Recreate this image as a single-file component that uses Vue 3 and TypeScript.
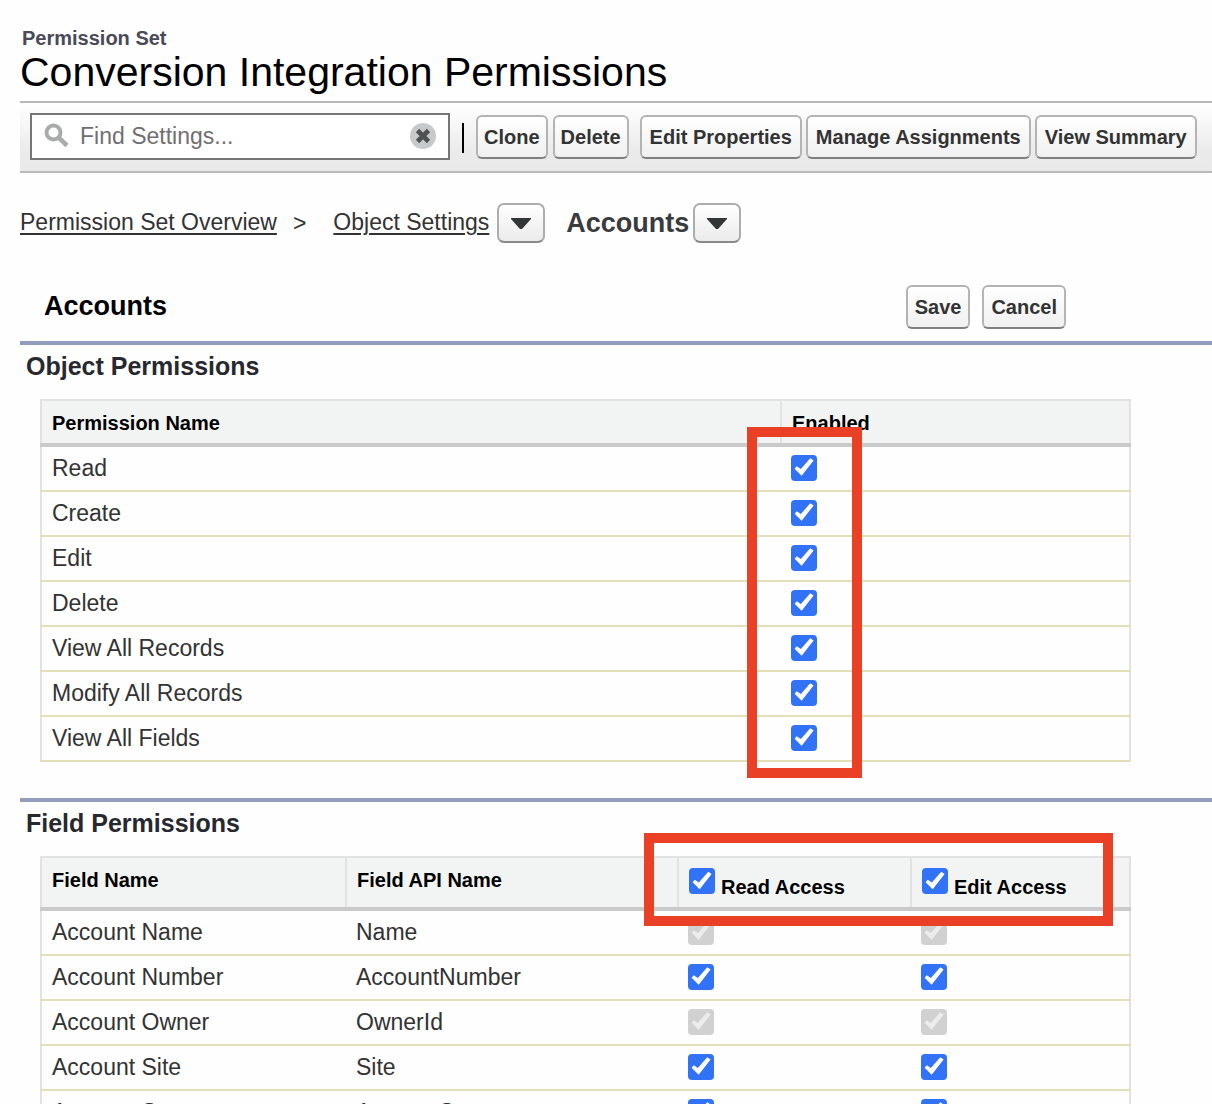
<script setup lang="ts">
import { ref } from 'vue'

interface ObjectPermission {
  name: string
  enabled: boolean
}

interface FieldPermission {
  name: string
  api: string
  read: boolean
  edit: boolean
  locked: boolean
}

const search = ref('')
const readAll = ref(true)
const editAll = ref(true)

const objectPermissions = ref<ObjectPermission[]>([
  { name: 'Read', enabled: true },
  { name: 'Create', enabled: true },
  { name: 'Edit', enabled: true },
  { name: 'Delete', enabled: true },
  { name: 'View All Records', enabled: true },
  { name: 'Modify All Records', enabled: true },
  { name: 'View All Fields', enabled: true },
])

const fieldPermissions = ref<FieldPermission[]>([
  { name: 'Account Name', api: 'Name', read: true, edit: true, locked: true },
  { name: 'Account Number', api: 'AccountNumber', read: true, edit: true, locked: false },
  { name: 'Account Owner', api: 'OwnerId', read: true, edit: true, locked: true },
  { name: 'Account Site', api: 'Site', read: true, edit: true, locked: false },
  { name: 'Account Source', api: 'AccountSource', read: true, edit: true, locked: false },
])
</script>

<template>
  <main class="page">
    <header class="heading">
      <p class="kind">Permission Set</p>
      <h1>Conversion Integration Permissions</h1>
    </header>

    <div class="toolbar">
      <div class="search">
        <svg class="lens" viewBox="0 0 26 26" aria-hidden="true">
          <circle cx="9.5" cy="9.5" r="7" fill="none" stroke="#a9abab" stroke-width="4" />
          <path d="M14.5 14.5 L23 22.5" stroke="#a9abab" stroke-width="4.5" />
        </svg>
        <input v-model="search" type="text" placeholder="Find Settings..." aria-label="Find Settings" />
        <button class="clear" type="button" aria-label="Clear search" @click="search = ''">
          <svg viewBox="0 0 26 26" aria-hidden="true">
            <circle cx="13" cy="13" r="13" fill="#c6cacd" />
            <path d="M7.5 7.5 L18.5 18.5 M18.5 7.5 L7.5 18.5" stroke="#505252" stroke-width="4.6" />
          </svg>
        </button>
      </div>
      <span class="divider"></span>
      <div class="actions">
        <div class="group">
          <button class="btn" type="button">Clone</button>
          <button class="btn" type="button">Delete</button>
        </div>
        <div class="group wide">
          <button class="btn" type="button">Edit Properties</button>
          <button class="btn" type="button">Manage Assignments</button>
          <button class="btn" type="button">View Summary</button>
        </div>
      </div>
    </div>

    <nav class="crumbs" aria-label="Breadcrumb">
      <a href="#overview">Permission Set Overview</a>
      <span class="chevron">&gt;</span>
      <a href="#objects">Object Settings</a>
      <button class="menu" type="button" aria-label="Choose settings">
        <svg viewBox="0 0 20 11" aria-hidden="true"><path d="M0 0 H20 V1 L11 11 H9 L0 1 Z" fill="#333637" /></svg>
      </button>
      <strong>Accounts</strong>
      <button class="menu" type="button" aria-label="Choose object">
        <svg viewBox="0 0 20 11" aria-hidden="true"><path d="M0 0 H20 V1 L11 11 H9 L0 1 Z" fill="#333637" /></svg>
      </button>
    </nav>

    <div class="edit-bar">
      <h2>Accounts</h2>
      <div class="edit-actions">
        <button class="btn" type="button">Save</button>
        <button class="btn" type="button">Cancel</button>
      </div>
    </div>

    <section class="block">
      <h3>Object Permissions</h3>
      <div class="grid">
        <table>
          <colgroup>
            <col />
            <col class="col-enabled" />
          </colgroup>
          <thead>
            <tr>
              <th scope="col">Permission Name</th>
              <th scope="col">Enabled</th>
            </tr>
          </thead>
          <tbody>
            <tr v-for="(row, i) in objectPermissions" :key="row.name">
              <td><label :for="'object-' + i">{{ row.name }}</label></td>
              <td><input :id="'object-' + i" v-model="row.enabled" type="checkbox" /></td>
            </tr>
          </tbody>
        </table>
        <div class="mark mark-enabled"></div>
      </div>
    </section>

    <section class="block">
      <h3>Field Permissions</h3>
      <div class="grid">
        <table>
          <colgroup>
            <col />
            <col class="col-api" />
            <col class="col-read" />
            <col class="col-edit" />
          </colgroup>
          <thead class="tall">
            <tr>
              <th scope="col">Field Name</th>
              <th scope="col">Field API Name</th>
              <th scope="col">
                <label class="all"><input v-model="readAll" type="checkbox" /><span>Read Access</span></label>
              </th>
              <th scope="col">
                <label class="all"><input v-model="editAll" type="checkbox" /><span>Edit Access</span></label>
              </th>
            </tr>
          </thead>
          <tbody>
            <tr v-for="row in fieldPermissions" :key="row.api">
              <td>{{ row.name }}</td>
              <td>{{ row.api }}</td>
              <td><input v-model="row.read" type="checkbox" :disabled="row.locked" :aria-label="'Read ' + row.name" /></td>
              <td><input v-model="row.edit" type="checkbox" :disabled="row.locked" :aria-label="'Edit ' + row.name" /></td>
            </tr>
          </tbody>
        </table>
        <div class="mark mark-access"></div>
      </div>
    </section>
  </main>
</template>

<style>
html {
  background: #fefefe;
}
html,
body,
#app {
  height: 100%;
}
</style>

<style scoped>
* {
  box-sizing: border-box;
}
.page {
  height: 100%;
  overflow: hidden;
  padding: 26px 0 0 20px;
  background: #fefefe;
  color: #333;
  font: 23px/28px "Liberation Sans", Arial, sans-serif;
}
h1,
h2,
h3,
p {
  margin: 0;
}
.heading {
  height: 75px;
}
.kind {
  padding-left: 2px;
  color: #4a4a56;
  font-size: 20px;
  font-weight: bold;
  line-height: 24px;
}
h1 {
  color: #000;
  font-size: 41px;
  font-weight: normal;
  line-height: 44px;
}
.toolbar {
  display: flex;
  align-items: flex-start;
  height: 72px;
  padding: 10px;
  border-top: 2px solid #b9b9b9;
  border-bottom: 2px solid #b9b9b9;
  background: linear-gradient(#fff, #ebebeb 70%, #e9e9e9);
}
.search {
  display: flex;
  align-items: center;
  gap: 10px;
  width: 420px;
  height: 47px;
  padding: 0 12px 2px;
  border: 2px solid #767676;
  background: #fff;
}
.lens {
  flex: none;
  width: 26px;
  height: 26px;
}
.search input {
  flex: 1;
  min-width: 0;
  padding: 0;
  border: 0;
  outline: 0;
  background: none;
  color: #333;
  font: inherit;
}
.search input::placeholder {
  color: #707070;
}
.clear {
  flex: none;
  width: 26px;
  height: 26px;
  padding: 0;
  border: 0;
  background: none;
}
.clear svg {
  display: block;
}
.divider {
  width: 2px;
  height: 30px;
  margin: 10px 12px 0;
  background: #000;
}
.actions {
  display: flex;
  gap: 11px;
  padding-top: 2px;
}
.group {
  display: flex;
  gap: 5px;
}
.btn {
  height: 44px;
  padding: 0 6px;
  border: 2px solid #b4b4b4;
  border-bottom-color: #7f7f7f;
  border-radius: 6px;
  background: linear-gradient(#fff, #f0f0f0);
  color: #333;
  font: bold 20px/24px "Liberation Sans", Arial, sans-serif;
  white-space: nowrap;
}
.wide {
  gap: 4px;
}
.wide .btn {
  padding: 0 8px;
}
.crumbs {
  display: flex;
  align-items: center;
  height: 40px;
  margin-top: 30px;
  white-space: nowrap;
}
.crumbs a {
  padding-bottom: 2px;
  color: #333;
  text-decoration-thickness: 2px;
  text-underline-offset: 3px;
}
.chevron {
  margin: 0 27px 0 16px;
}
.crumbs strong {
  margin: 0 4px 0 21px;
  color: #3a3b3d;
  font-size: 27px;
}
.menu {
  display: flex;
  align-items: center;
  justify-content: center;
  width: 48px;
  height: 40px;
  padding: 0;
  border: 2px solid #adadad;
  border-bottom-color: #8a8a8a;
  border-radius: 7px;
  background: linear-gradient(#fff, #ebebeb);
}
.crumbs a + .menu {
  margin-left: 8px;
}
.menu svg {
  width: 20px;
  height: 11px;
}
.edit-bar {
  display: flex;
  align-items: center;
  justify-content: space-between;
  height: 98px;
  padding: 30px 146px 0 24px;
}
.edit-bar h2 {
  padding-bottom: 2px;
  color: #000;
  font-size: 27px;
}
.edit-actions {
  display: flex;
  gap: 12px;
}
.edit-actions .btn {
  padding: 0 7px;
}
.block {
  padding-bottom: 36px;
  border-top: 4px solid #929dbd;
}
h3 {
  height: 54px;
  padding: 6px 6px 0;
  color: #28282f;
  font-size: 25px;
  line-height: 30px;
}
.grid {
  position: relative;
  margin: 0 81px 0 20px;
}
table {
  width: 100%;
  border: 2px solid #e0e3e2;
  border-collapse: collapse;
  table-layout: fixed;
}
.col-enabled {
  width: 349px;
}
.col-api {
  width: 332px;
}
.col-read {
  width: 233px;
}
.col-edit {
  width: 219px;
}
th {
  height: 45px;
  padding: 2px 10px 0;
  border-bottom: 4px solid #c9cac9;
  background: #f2f4f3;
  color: #000;
  font-size: 20px;
  line-height: 24px;
  text-align: left;
}
th + th {
  border-left: 2px solid #e0e3e2;
}
.tall th {
  height: 52px;
  padding-top: 10px;
  vertical-align: top;
}
.all {
  display: flex;
  gap: 6px;
}
.all span {
  padding-top: 7px;
}
td {
  height: 45px;
  padding: 0 10px 2px;
  border-bottom: 2px solid #e3dfb9;
}
tr:first-child td {
  height: 46px;
}
input[type="checkbox"] {
  display: block;
  flex: none;
  width: 26px;
  height: 26px;
  margin: 0;
  border-radius: 4px;
  background: #3172f6;
  appearance: none;
}
input[type="checkbox"]:checked::before {
  display: block;
  width: 26px;
  height: 26px;
  background: #fff;
  clip-path: polygon(14% 55%, 22% 45%, 38% 56%, 74% 14%, 87% 23%, 41% 82%);
  content: "";
}
input[type="checkbox"]:disabled {
  background: #d1d1d1;
}
input[type="checkbox"]:disabled::before {
  background: #ececec;
}
.mark {
  position: absolute;
  border: 10px solid #ea4025;
  pointer-events: none;
}
.mark-enabled {
  top: 28px;
  right: 269px;
  bottom: -16px;
  width: 115px;
}
.mark-access {
  top: -23px;
  right: 18px;
  width: 469px;
  height: 93px;
}
</style>
